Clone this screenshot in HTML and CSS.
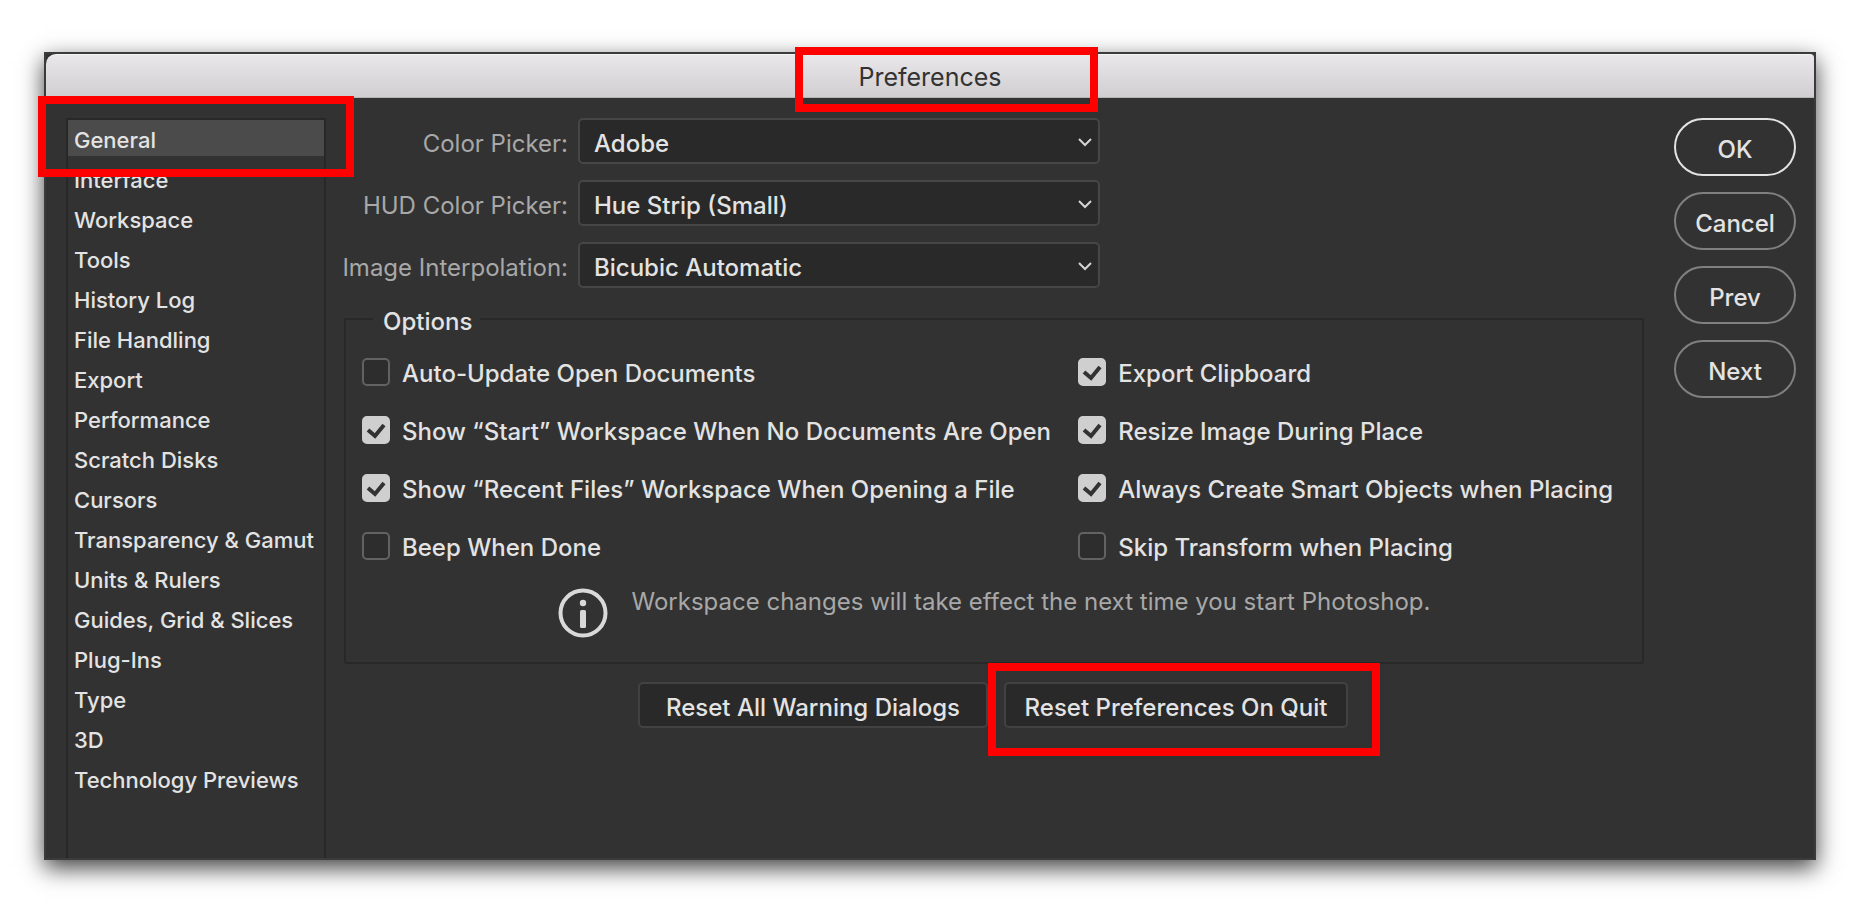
FILE: index.html
```html
<!DOCTYPE html>
<html lang="en">
<head>
    <meta charset="UTF-8">
    <meta name="viewport" content="width=device-width, initial-scale=1.0">
    <title>Preferences</title>
    <link rel="stylesheet" href="styles.css">
</head>
<body>
    <div class="window">
        <header class="titlebar">
            <h1>Preferences</h1>
            <span class="mark mark-title"></span>
        </header>
        <div class="content">
            <nav class="sidebar">
                <ul>
                    <li class="active"><a href="#general">General</a><span class="mark mark-general"></span></li>
                    <li><a href="#interface">Interface</a></li>
                    <li><a href="#workspace">Workspace</a></li>
                    <li><a href="#tools">Tools</a></li>
                    <li><a href="#history">History Log</a></li>
                    <li><a href="#files">File Handling</a></li>
                    <li><a href="#export">Export</a></li>
                    <li><a href="#performance">Performance</a></li>
                    <li><a href="#scratch">Scratch Disks</a></li>
                    <li><a href="#cursors">Cursors</a></li>
                    <li><a href="#transparency">Transparency &amp; Gamut</a></li>
                    <li><a href="#units">Units &amp; Rulers</a></li>
                    <li><a href="#guides">Guides, Grid &amp; Slices</a></li>
                    <li><a href="#plugins">Plug-Ins</a></li>
                    <li><a href="#type">Type</a></li>
                    <li><a href="#3d">3D</a></li>
                    <li><a href="#previews">Technology Previews</a></li>
                </ul>
            </nav>
            <main class="main">
                <div class="fields">
                    <label for="picker">Color Picker:</label>
                    <div class="select">
                        <select id="picker"><option>Adobe</option></select>
                        <svg viewBox="0 0 14 8"><path d="M1 1l6 6 6-6"/></svg>
                    </div>
                    <label for="hud">HUD Color Picker:</label>
                    <div class="select">
                        <select id="hud"><option>Hue Strip (Small)</option></select>
                        <svg viewBox="0 0 14 8"><path d="M1 1l6 6 6-6"/></svg>
                    </div>
                    <label for="interpolation">Image Interpolation:</label>
                    <div class="select">
                        <select id="interpolation"><option>Bicubic Automatic</option></select>
                        <svg viewBox="0 0 14 8"><path d="M1 1l6 6 6-6"/></svg>
                    </div>
                </div>
                <fieldset class="options">
                    <legend>Options</legend>
                    <div class="checks">
                        <label><span class="box"><input type="checkbox"><svg viewBox="0 0 28 28"><path d="M6 14l7 6 9-11"/></svg></span>Auto-Update Open Documents</label>
                        <label><span class="box"><input type="checkbox" checked><svg viewBox="0 0 28 28"><path d="M6 14l7 6 9-11"/></svg></span>Export Clipboard</label>
                        <label><span class="box"><input type="checkbox" checked><svg viewBox="0 0 28 28"><path d="M6 14l7 6 9-11"/></svg></span>Show “Start” Workspace When No Documents Are Open</label>
                        <label><span class="box"><input type="checkbox" checked><svg viewBox="0 0 28 28"><path d="M6 14l7 6 9-11"/></svg></span>Resize Image During Place</label>
                        <label><span class="box"><input type="checkbox" checked><svg viewBox="0 0 28 28"><path d="M6 14l7 6 9-11"/></svg></span>Show “Recent Files” Workspace When Opening a File</label>
                        <label><span class="box"><input type="checkbox" checked><svg viewBox="0 0 28 28"><path d="M6 14l7 6 9-11"/></svg></span>Always Create Smart Objects when Placing</label>
                        <label><span class="box"><input type="checkbox"><svg viewBox="0 0 28 28"><path d="M6 14l7 6 9-11"/></svg></span>Beep When Done</label>
                        <label><span class="box"><input type="checkbox"><svg viewBox="0 0 28 28"><path d="M6 14l7 6 9-11"/></svg></span>Skip Transform when Placing</label>
                    </div>
                    <div class="info">
                        <svg viewBox="0 0 50 50">
                            <circle cx="25" cy="25" r="22.5" fill="none" stroke="#d9d9d9" stroke-width="4"/>
                            <circle cx="25" cy="15" r="3.2" fill="#d9d9d9"/>
                            <rect x="22" y="22" width="6" height="18" rx="1.5" fill="#d9d9d9"/>
                        </svg>
                        <p>Workspace changes will take effect the next time you start Photoshop.</p>
                    </div>
                </fieldset>
                <div class="resets">
                    <button class="reset reset-dialogs">Reset All Warning Dialogs</button>
                    <div class="marked">
                        <button class="reset">Reset Preferences On Quit</button>
                        <span class="mark mark-reset"></span>
                    </div>
                </div>
            </main>
            <div class="actions">
                <button class="primary">OK</button>
                <button>Cancel</button>
                <button>Prev</button>
                <button>Next</button>
            </div>
        </div>
    </div>
</body>
</html>
```

FILE: styles.css
```css
* {
    box-sizing: border-box;
}
body {
    font-family: Inter, "Liberation Sans", sans-serif;
    font-size: 24px;
    font-weight: 500;
    line-height: 28px;
    color: #e3e3e3;
    background: white;
    display: flex;
    min-height: 100vh;
    margin: 0;
    padding: 52px 44px;
}
.window {
    flex: 1;
    display: flex;
    flex-direction: column;
    background: #323232;
    border: 2px solid #3b3b3b;
    box-shadow: 0 8px 22px rgba(0, 0, 0, 0.75);
}
.titlebar {
    position: relative;
    display: flex;
    align-items: center;
    justify-content: center;
    height: 44px;
    background: linear-gradient(#e9e7ea, #d0ced1);
    border-top: 1px solid #f6f5f6;
    border-bottom: 1px solid #b4b3b5;
    border-radius: 10px 4px 0 0;
}
h1 {
    margin: 0;
    padding-top: 2px;
    font-size: 25px;
    font-weight: 400;
    color: #333;
}
/* red callout frames */
.mark {
    position: absolute;
    z-index: 1;
    border: 8px solid red;
    pointer-events: none;
}
.mark-title {
    top: -8px;
    left: calc(50% - 135px);
    width: 303px;
    height: 65px;
}
.mark-general {
    top: -24px;
    bottom: -21px;
    left: -30px;
    right: -30px;
}
.mark-reset {
    top: -19px;
    bottom: -28px;
    left: -16px;
    right: -32px;
}
.content {
    flex: 1;
    display: flex;
    padding: 20px 18px 0 20px;
}
.sidebar {
    width: 260px;
    margin-right: 18px;
    border: 2px solid #282828;
    border-bottom: none;
    font-size: 22px;
}
.sidebar ul {
    list-style: none;
    margin: 0;
    padding: 0;
}
.sidebar li {
    position: relative;
    height: 36px;
    margin-bottom: 4px;
    padding: 6px 0 0 6px;
    white-space: nowrap;
}
.sidebar a {
    color: inherit;
    text-decoration: none;
}
.active {
    background: #4b4b4b;
}
.main {
    flex: 1;
    margin-right: 30px;
}
.fields {
    display: grid;
    grid-template-columns: 224px minmax(0, 522px);
    gap: 16px 10px;
    align-items: center;
}
.fields label {
    justify-self: end;
    padding-top: 6px;
    white-space: nowrap;
    font-weight: 400;
    color: #a8a8a8;
}
.select {
    position: relative;
}
.select select {
    display: block;
    appearance: none;
    width: 100%;
    height: 46px;
    padding: 6px 40px 0 14px;
    font: inherit;
    color: inherit;
    background: #292929;
    border: 2px solid #464646;
    border-radius: 5px;
}
.select svg {
    position: absolute;
    top: 20px;
    right: 8px;
    width: 14px;
    height: 8px;
    overflow: visible;
    fill: none;
    stroke: #d5d5d5;
    stroke-width: 2;
    pointer-events: none;
}
.options {
    margin: 13px 0 0;
    padding: 21px 16px 24px;
    border: 2px solid #282828;
    border-radius: 2px;
}
.options legend {
    margin-left: 11px;
    padding: 6px 8px 0 10px;
    line-height: 30px;
}
.checks {
    display: grid;
    grid-template-columns: 17fr 13fr;
    row-gap: 30px;
}
.checks label {
    display: flex;
    gap: 12px;
    height: 28px;
    white-space: nowrap;
    line-height: 32px;
}
.box {
    position: relative;
    width: 28px;
    height: 28px;
}
.box input {
    display: block;
    appearance: none;
    width: 28px;
    height: 28px;
    margin: 0;
    background: #2d2d2d;
    border: 2px solid #626262;
    border-radius: 5px;
}
.box input:checked {
    background: #cfcfcf;
    border-color: #cfcfcf;
}
.box svg {
    position: absolute;
    inset: 0;
    display: none;
    fill: none;
    stroke: #323232;
    stroke-width: 4;
    pointer-events: none;
}
.box input:checked + svg {
    display: block;
}
.info {
    display: flex;
    justify-content: center;
    gap: 24px;
    margin-top: 28px;
    font-weight: 400;
    color: #a8a8a8;
}
.info svg {
    width: 50px;
    height: 50px;
}
.info p {
    margin: 0;
}
.resets {
    display: flex;
    justify-content: center;
    gap: 16px;
    margin: 18px 2px 0 0;
}
.marked {
    position: relative;
}
button {
    font: inherit;
    color: inherit;
    white-space: nowrap;
    cursor: pointer;
}
.reset {
    display: block;
    min-width: 344px;
    height: 46px;
    padding: 6px 10px 0;
    background: #292929;
    border: 2px solid #424242;
    border-radius: 5px;
}
.reset-dialogs {
    min-width: 350px;
}
.actions {
    width: 122px;
    display: flex;
    flex-direction: column;
    gap: 16px;
}
.actions button {
    height: 58px;
    padding: 6px 0 0;
    background: none;
    border: 2px solid #808080;
    border-radius: 29px;
}
.actions .primary {
    border-color: #e3e3e3;
}
```
